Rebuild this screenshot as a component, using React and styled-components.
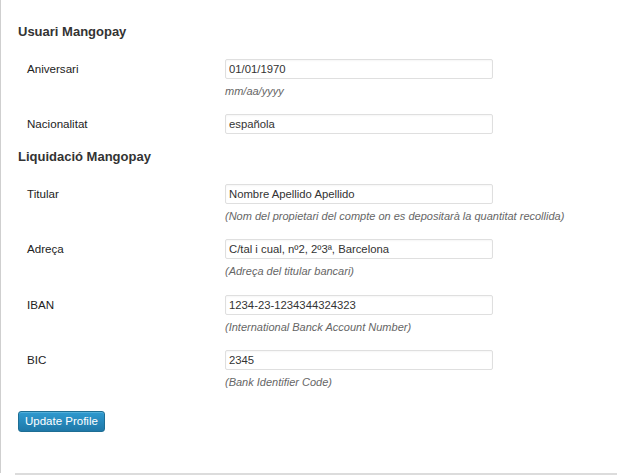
import React from "react";
import styled, { createGlobalStyle } from "styled-components";

const GlobalStyle = createGlobalStyle`
	html, body {
		margin: 0;
		padding: 0;
		background: #fff;
		font-family: "Liberation Sans", Arial, sans-serif;
	}
`;

const Page = styled.div`
	width: 617px;
	height: 475px;
	overflow: hidden;
	display: flex;
	flex-direction: column;
`;

const Panel = styled.div`
	flex: 1;
	border-left: 1px solid #cfcfcf;
	padding: 24px 0 0 17px;
	box-sizing: border-box;
`;

const SectionTitle = styled.h3`
	margin: 0 0 19px;
	font-size: 13px;
	line-height: 16px;
	font-weight: bold;
	color: #333;
`;

const Row = styled.div`
	display: grid;
	grid-template-columns: 198px 268px;
	padding-left: 9px;
	margin-bottom: ${(p) => (p.$tight ? 15 : 15.4)}px;
`;

const Label = styled.label`
	font-size: 11.6px;
	line-height: 20px;
	color: #222;
`;

const Field = styled.div`
	display: flex;
	flex-direction: column;
`;

const Input = styled.input`
	box-sizing: border-box;
	width: 268px;
	height: 20px;
	margin: 0;
	padding: 0 3px;
	border: 1px solid #dfdfdf;
	border-radius: 2px;
	box-shadow: inset 0 1px 2px rgba(0, 0, 0, 0.04);
	font-family: "Liberation Sans", Arial, sans-serif;
	font-size: 11.3px;
	color: #333;
	background: #fff;
	outline: none;
`;

const Description = styled.span`
	margin-top: 4px;
	font-size: 11px;
	line-height: 16px;
	font-style: italic;
	color: #666;
	white-space: nowrap;
`;

const Actions = styled.div`
	padding: 5px 0 0;
`;

const PrimaryButton = styled.button`
	box-sizing: border-box;
	height: 21px;
	padding: 0 6px;
	border: 1px solid #1e6e94;
	border-radius: 3px;
	background: linear-gradient(to bottom, #2f9ad0, #1f78a8);
	box-shadow: inset 0 1px 0 rgba(120, 200, 230, 0.5);
	color: #fff;
	font-family: "Liberation Sans", Arial, sans-serif;
	font-size: 11.5px;
	cursor: pointer;
`;

const Footer = styled.div`
	height: 2px;
	margin: 0 0 0 15px;
	background: #dcdcdc;
	flex: none;
`;

const sections = [
	{
		title: "Usuari Mangopay",
		fields: [
			{ label: "Aniversari", value: "01/01/1970", hint: "mm/aa/yyyy" },
			{ label: "Nacionalitat", value: "española" },
		],
	},
	{
		title: "Liquidació Mangopay",
		fields: [
			{
				label: "Titular",
				value: "Nombre Apellido Apellido",
				hint: "(Nom del propietari del compte on es depositarà la quantitat recollida)",
			},
			{
				label: "Adreça",
				value: "C/tal i cual, nº2, 2º3ª, Barcelona",
				hint: "(Adreça del titular bancari)",
			},
			{
				label: "IBAN",
				value: "1234-23-1234344324323",
				hint: "(International Banck Account Number)",
			},
			{ label: "BIC", value: "2345", hint: "(Bank Identifier Code)" },
		],
	},
];

export default function App() {
	return (
		<Page>
			<GlobalStyle />
			<Panel>
				{sections.map((section, si) => (
					<div key={section.title}>
						<SectionTitle>{section.title}</SectionTitle>
						{section.fields.map((f) => (
							<Row key={f.label} $tight={si === 0}>
								<Label>{f.label}</Label>
								<Field>
									<Input defaultValue={f.value} />
									{f.hint && <Description>{f.hint}</Description>}
								</Field>
							</Row>
						))}
					</div>
				))}
				<Actions>
					<PrimaryButton>Update Profile</PrimaryButton>
				</Actions>
			</Panel>
			<Footer />
		</Page>
	);
}
